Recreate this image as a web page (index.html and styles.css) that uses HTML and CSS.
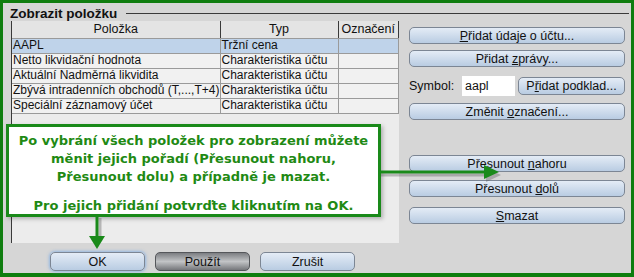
FILE: index.html
```html
<!DOCTYPE html>
<html lang="cs">
<head>
    <meta charset="UTF-8">
    <title>Zobrazit položku</title>
    <link rel="stylesheet" href="styles.css">
</head>
<body>
<div class="screen">
    <div class="frame">
        <div class="group-title">
            <span>Zobrazit položku</span>
            <div class="group-line"></div>
        </div>

        <div class="main">
            <div class="table-area">
                <table class="items">
                    <thead>
                        <tr>
                            <th class="col-item">Položka</th>
                            <th class="col-type">Typ</th>
                            <th class="col-label">Označení</th>
                        </tr>
                    </thead>
                    <tbody>
                        <tr class="selected"><td>AAPL</td><td>Tržní cena</td><td></td></tr>
                        <tr><td>Netto likvidační hodnota</td><td>Charakteristika účtu</td><td></td></tr>
                        <tr><td>Aktuální Nadměrná likvidita</td><td>Charakteristika účtu</td><td></td></tr>
                        <tr><td>Zbývá intradenních obchodů (T,...,T+4)</td><td>Charakteristika účtu</td><td></td></tr>
                        <tr><td>Speciální záznamový účet</td><td>Charakteristika účtu</td><td></td></tr>
                    </tbody>
                </table>
            </div>

            <div class="side">
                <button class="btn btn-first"><u>P</u>řidat údaje o účtu...</button>
                <button class="btn btn-second">Přidat <u>z</u>právy...</button>
                <div class="symbol-row">
                    <span class="symbol-label">Symbol:</span>
                    <input class="symbol-input" type="text" value="aapl">
                    <button class="btn btn-small">P<u>ř</u>idat podklad...</button>
                </div>
                <button class="btn btn-change">Změnit <u>o</u>značení...</button>
                <button class="btn btn-up">Přesunout <u>n</u>ahoru</button>
                <button class="btn btn-down">Přesunout <u>d</u>olů</button>
                <button class="btn btn-delete"><u>S</u>mazat</button>
            </div>
        </div>

        <div class="footer">
            <button class="btn btn-footer btn-ok">OK</button>
            <button class="btn btn-footer btn-dark">Použít</button>
            <button class="btn btn-footer">Zrušit</button>
        </div>
    </div>

    <div class="callout">
        <p>Po vybrání všech položek pro zobrazení můžete<br>měnit jejich pořadí (Přesunout nahoru,<br>Přesunout dolu) a případně je mazat.</p>
        <p class="callout-last">Pro jejich přidání potvrďte kliknutím na OK.</p>
    </div>

    <svg class="arrows" width="634" height="277" viewBox="0 0 634 277">
        <g opacity="0.35" fill="#555" stroke="#555">
            <line x1="381" y1="175" x2="488" y2="175" stroke-width="3"/>
            <polygon points="486,168 501,175 486,182" stroke="none"/>
            <line x1="100" y1="218" x2="100" y2="238" stroke-width="3"/>
        </g>
        <g fill="#1a8a1a" stroke="#1a8a1a">
            <line x1="381" y1="172" x2="487" y2="172" stroke-width="3"/>
            <polygon points="484,165 499,172 484,179" stroke="none"/>
            <line x1="97" y1="217" x2="97" y2="237" stroke-width="3"/>
            <polygon points="89,236 105,236 97,249" stroke="none"/>
        </g>
    </svg>
</div>
</body>
</html>
```

FILE: styles.css
```css
* {
    box-sizing: border-box;
    margin: 0;
    padding: 0;
}

body {
    font-family: 'Liberation Sans', Arial, sans-serif;
    font-size: 12.5px;
    color: #111;
}

.screen {
    position: relative;
    width: 634px;
    height: 277px;
}

.frame {
    width: 634px;
    height: 277px;
    border: 3px solid #0f7d0f;
    border-bottom-width: 4px;
    background: #d6d6d6;
    padding: 3px 0 0 7px;
}

.group-title {
    display: flex;
    align-items: center;
    height: 14px;
    font-size: 13.5px;
    font-weight: bold;
    color: #111;
}

.group-line {
    flex: 1;
    height: 1px;
    margin-left: 9px;
    margin-right: 2px;
    background: #3a3a3a;
}

.main {
    display: flex;
    margin-top: 1px;
}

.table-area {
    width: 388px;
    height: 222px;
    margin-left: 1px;
    background: #ececec;
    border-left: 1px solid #3a3a3a;
}

.items {
    border-collapse: collapse;
    table-layout: fixed;
    width: 387px;
}

.items th {
    height: 17px;
    font-weight: normal;
    font-size: 12.5px;
    text-align: center;
    background: #e4e4e4;
    border-right: 1px solid #3a3a3a;
    border-bottom: 1px solid #9a9a9a;
    padding: 0;
}

.col-item {
    width: 208px;
}

.col-type {
    width: 118px;
}

.items td {
    height: 15px;
    padding: 0 0 0 1px;
    font-size: 12px;
    background: #f1f1f1;
    border: 1px solid #9a9a9a;
    white-space: nowrap;
    line-height: 13px;
}

.items td:first-child {
    border-left: none;
}

.items tr.selected td {
    background: #bfd3ea;
}

.side {
    display: flex;
    flex-direction: column;
    width: 216px;
    margin-left: 10px;
    padding-top: 6px;
}

.btn {
    height: 17px;
    border: 1px solid #7c8694;
    border-radius: 5px;
    background: linear-gradient(#e4ecf6, #b9cce2);
    font-family: 'Liberation Sans', Arial, sans-serif;
    font-size: 12.5px;
    color: #111;
    line-height: 14px;
    padding: 0;
}

.btn u {
    text-decoration-thickness: 1px;
    text-underline-offset: 1px;
}

.btn-second {
    margin-top: 6px;
}

.symbol-row {
    display: flex;
    align-items: center;
    height: 20px;
    margin-top: 9px;
}

.symbol-label {
    width: 53px;
}

.symbol-input {
    width: 53px;
    height: 20px;
    border: none;
    background: #fff;
    padding-left: 3px;
    font-family: 'Liberation Sans', Arial, sans-serif;
    font-size: 12.5px;
    color: #111;
}

.btn-small {
    width: 107px;
    height: 18px;
    margin-left: 3px;
}

.btn-change {
    margin-top: 7px;
}

.btn-up {
    margin-top: 35px;
}

.btn-down {
    margin-top: 8px;
}

.btn-delete {
    margin-top: 10px;
}

.footer {
    display: flex;
    gap: 10px;
    margin-top: 9px;
    margin-left: 40px;
}

.btn-footer {
    width: 95px;
    height: 19px;
}

.btn-ok {
    box-shadow: 0 0 3px 1px rgba(120, 170, 230, 0.7);
}

.btn-dark {
    background: linear-gradient(#7c7e82, #c2c4c6 50%, #75777b);
    border-color: #55575b;
}

.callout {
    position: absolute;
    left: 6px;
    top: 124px;
    width: 375px;
    height: 93px;
    border: 3px solid #1a8a1a;
    background: #fff;
    box-shadow: 2px 2px 4px rgba(0, 0, 0, 0.25);
    font-family: 'DejaVu Sans', Verdana, sans-serif;
    font-weight: bold;
    font-size: 13px;
    line-height: 18px;
    color: #1f8a14;
    text-align: center;
    padding-top: 5px;
}

.callout-last {
    margin-top: 11px;
}

.arrows {
    position: absolute;
    left: 0;
    top: 0;
    pointer-events: none;
}
```
